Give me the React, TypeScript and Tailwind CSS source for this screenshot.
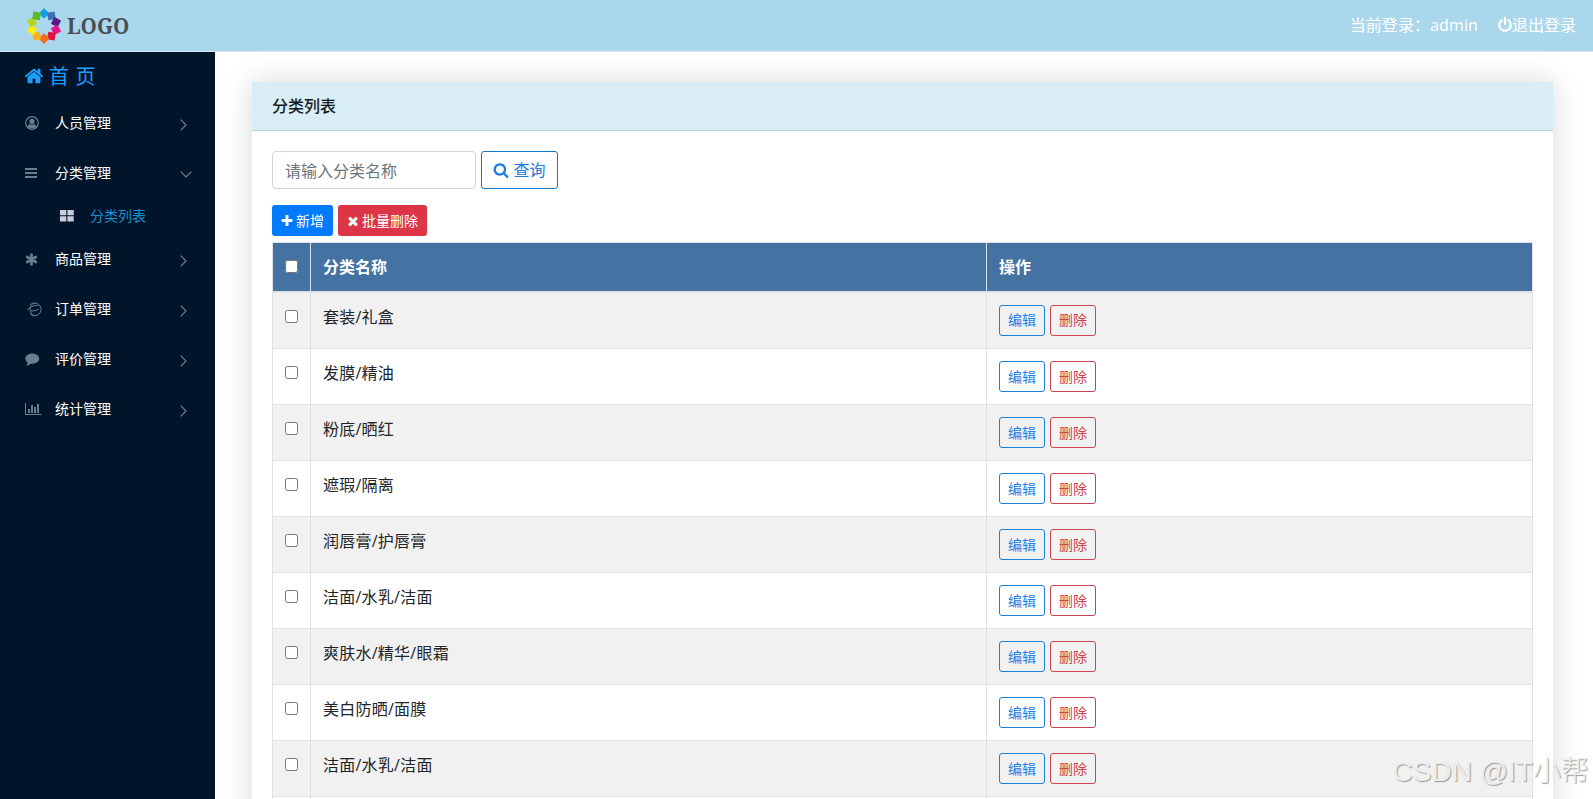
import React from 'react';
import clsx from 'clsx';

const logoColors = [
  '#149ee8', '#3f6fb5', '#5a1a86', '#e6128c', '#dc1440',
  '#f26c1c', '#fbb01a', '#f6ee10', '#b4d81c', '#58b82e',
];

// 1792 x 1792 icon grid
const icons = {
  home: 'M1472 992v480q0 26-19 45t-45 19h-384v-384h-256v384h-384q-26 0-45-19t-19-45v-480q0-1 .5-3t.5-3l575-474 575 474q1 2 1 6zm223-69l-62 74q-8 9-21 11h-3q-13 0-21-7l-692-577-692 577q-12 8-24 7-13-2-21-11l-62-74q-8-10-7-23.5t11-21.5l719-599q32-26 76-26t76 26l244 204v-195q0-14 9-23t23-9h192q14 0 23 9t9 23v408l219 182q10 8 11 21.5t-7 23.5z',
  power: 'M1664 896q0 156-61 298t-164 245-245 164-298 61-298-61-245-164-164-245-61-298q0-182 80.5-343t226.5-270q43-32 95.5-25t83.5 50q32 42 24.5 94.5t-49.5 84.5q-98 74-151.5 181t-53.5 228q0 104 40.5 198.5t109.5 163.5 163.5 109.5 198.5 40.5 198.5-40.5 163.5-109.5 109.5-163.5 40.5-198.5q0-121-53.5-228t-151.5-181q-42-32-49.5-84.5t24.5-94.5q31-43 84-50t95 25q146 109 226.5 270t80.5 343zm-640-768v640q0 52-38 90t-90 38-90-38-38-90v-640q0-52 38-90t90-38 90 38 38 90z',
  search: 'M1216 832q0-185-131.5-316.5t-316.5-131.5-316.5 131.5-131.5 316.5 131.5 316.5 316.5 131.5 316.5-131.5 131.5-316.5zm512 832q0 52-38 90t-90 38q-54 0-90-38l-343-342q-179 124-399 124-143 0-273.5-55.5t-225-150-150-225-55.5-273.5 55.5-273.5 150-225 225-150 273.5-55.5 273.5 55.5 225 150 150 225 55.5 273.5q0 220-124 399l343 343q37 37 37 90z',
  plus: 'M1600 736v192q0 40-28 68t-68 28h-416v416q0 40-28 68t-68 28h-192q-40 0-68-28t-28-68v-416h-416q-40 0-68-28t-28-68v-192q0-40 28-68t68-28h416v-416q0-40 28-68t68-28h192q40 0 68 28t28 68v416h416q40 0 68 28t28 68z',
  times: 'M1490 1322q0 40-28 68l-136 136q-28 28-68 28t-68-28l-294-294-294 294q-28 28-68 28t-68-28l-136-136q-28-28-28-68t28-68l294-294-294-294q-28-28-28-68t28-68l136-136q28-28 68-28t68 28l294 294 294-294q28-28 68-28t68 28l136 136q28 28 28 68t-28 68l-294 294 294 294q28 28 28 68z',
};

const categories = [
  '套装/礼盒',
  '发膜/精油',
  '粉底/晒红',
  '遮瑕/隔离',
  '润唇膏/护唇膏',
  '洁面/水乳/洁面',
  '爽肤水/精华/眼霜',
  '美白防晒/面膜',
  '洁面/水乳/洁面',
];

function Icon({ name, className }: { name: keyof typeof icons; className?: string }) {
  return (
    <svg className={clsx('shrink-0', className)} viewBox="0 0 1792 1792" fill="currentColor">
      <path d={icons[name]} />
    </svg>
  );
}

function Logo() {
  return (
    <div className="flex items-center">
      <svg width="36" height="36" viewBox="-18 -18 36 36">
        {logoColors.map((color, i) => (
          <rect key={i} x="-3.8" y="-16.4" width="7.6" height="7.6" fill={color} transform={`rotate(${i * 36}) rotate(45 0 -12.6)`} />
        ))}
      </svg>
      <span className="ml-[5px] font-['Noto_Serif','Liberation_Serif',serif] text-[20.8px] font-bold text-[#4a4f55]">LOGO</span>
    </div>
  );
}

function UserIcon() {
  return (
    <svg width="14" height="14" viewBox="0 0 14 14">
      <circle cx="7" cy="7" r="6.3" fill="none" stroke="currentColor" strokeWidth="1.2" />
      <circle cx="7" cy="5.4" r="2.6" fill="currentColor" />
      <path d="M2.4 10.6C3 8.8 4.4 8.2 5.4 8.2C6.4 8.8 7.6 8.8 8.6 8.2C9.6 8.2 11 8.8 11.6 10.6C9.6 13.1 4.4 13.1 2.4 10.6Z" fill="currentColor" />
    </svg>
  );
}

function BarsIcon() {
  return (
    <svg width="12" height="10" viewBox="0 0 12 10" fill="currentColor">
      <path d="M0 0h12v2H0zM0 4h12v2H0zM0 8h12v2H0z" />
    </svg>
  );
}

function AsteriskIcon() {
  return (
    <svg width="13" height="13" viewBox="0 0 13 13" stroke="currentColor" strokeWidth="2.7" strokeLinecap="round">
      <path d="M6.5 1.5v10M2.2 4l8.6 5M10.8 4L2.2 9" />
    </svg>
  );
}

function SwirlIcon() {
  return (
    <svg className="ml-[2px]" width="15" height="15" viewBox="0 0 15 15" fill="none" stroke="currentColor" strokeWidth="1">
      <path d="M3.4 2.6A6.4 6.4 0 1 1 3.2 12" />
      <path d="M8 1C3.6 2.4 1.8 6 3.6 10.2C5 13.2 7.5 14 10 13.6" />
      <path d="M.6 8C2.5 5 6 3.4 11 3.4M4 8.8C7 9.2 9.5 8.4 11.5 7" />
    </svg>
  );
}

function CommentIcon() {
  return (
    <svg width="15" height="13" viewBox="0 0 15 13" fill="currentColor">
      <path d="M7.3.4C11.2.4 14.3 2.7 14.3 5.6C14.3 8.5 11.2 10.8 7.3 10.8C6.8 10.8 6.3 10.8 5.8 10.7C4.6 11.8 3 12.5 1.2 12.6C1.9 11.8 2.5 10.9 2.7 9.7C1.2 8.7.3 7.2.3 5.6C.3 2.7 3.4.4 7.3.4Z" />
    </svg>
  );
}

function ChartIcon() {
  return (
    <svg width="17" height="13" viewBox="0 0 17 13" fill="currentColor">
      <path d="M0 0h1v11h15.5v1H0zM3 6h2v4H3zM6 2h2v8H6zM9 4h2v6H9zM12 1h2v9h-2z" />
    </svg>
  );
}

function GridIcon() {
  return (
    <svg className="mr-[16px] text-[#c8cede]" width="14" height="12" viewBox="0 0 14 12" fill="currentColor">
      <path d="M0 0h6.3v5.3H0zM7.4 0h6.3v5.3H7.4zM0 6.3h6.3v5.3H0zM7.4 6.3h6.3v5.3H7.4z" />
    </svg>
  );
}

function Chevron({ open }: { open?: boolean }) {
  return (
    <svg
      className={open ? 'mr-[23px] mt-[3px]' : 'mr-7 mt-1'}
      width={open ? 12 : 7}
      height={open ? 7 : 12}
      viewBox={open ? '0 0 12 7' : '0 0 7 12'}
      fill="none"
      stroke="#71808f"
      strokeWidth="1.2"
    >
      <path d={open ? 'M.7.7L6 6L11.3.7' : 'M.7.7L6 6L.7 11.3'} />
    </svg>
  );
}

function MenuItem({ icon, label, open }: { icon: React.ReactNode; label: string; open?: boolean }) {
  return (
    <div className="flex h-[50px] items-center pl-[25px] text-[14px] text-white">
      <span className="flex w-[30px] items-center text-[#6a7f8e]">{icon}</span>
      <span className="flex-1">{label}</span>
      <Chevron open={open} />
    </div>
  );
}

function Sidebar() {
  return (
    <aside className="w-[215px] shrink-0 bg-[#001529]">
      <div className="flex h-[46px] items-center pl-[24px] pt-[3px] text-[20px] text-[#1e9fff]">
        <Icon name="home" className="mb-[2px] mr-[5px] size-[20px]" />
        <span className="tracking-[0.6px]">首 页</span>
      </div>
      <MenuItem icon={<UserIcon />} label="人员管理" />
      <MenuItem icon={<BarsIcon />} label="分类管理" open />
      <div className="flex h-9 items-center pl-[60px] text-[14px] text-[#1890d8]">
        <GridIcon />
        <span>分类列表</span>
      </div>
      <MenuItem icon={<AsteriskIcon />} label="商品管理" />
      <MenuItem icon={<SwirlIcon />} label="订单管理" />
      <MenuItem icon={<CommentIcon />} label="评价管理" />
      <MenuItem icon={<ChartIcon />} label="统计管理" />
    </aside>
  );
}

function CategoryTable() {
  return (
    <table className="mt-[6px] w-[1261px] table-fixed border-collapse border border-[#dee2e6]">
      <thead>
        <tr className="h-[49px] bg-[#4472a2] text-left text-white">
          <th className="w-[38px] border border-b-2 border-[#dee2e6] pl-3">
            <input type="checkbox" className="block size-[13px]" />
          </th>
          <th className="w-[676px] border border-b-2 border-[#dee2e6] px-3">分类名称</th>
          <th className="border border-b-2 border-[#dee2e6] px-3">操作</th>
        </tr>
      </thead>
      <tbody>
        {categories.map((name, i) => (
          <tr key={i} className="h-14 first:h-[57px] odd:bg-[#f1f1f1]">
            <td className="border border-[#dee2e6] pl-3 pt-[17px] align-top">
              <input type="checkbox" className="block size-[13px]" />
            </td>
            <td className="border border-[#dee2e6] px-3 pt-3 align-top tracking-[0.25px]">{name}</td>
            <td className="border border-[#dee2e6] px-3 pt-3 align-top">
              <div className="flex gap-[5px] text-[14px]">
                <button className="h-[31px] w-[46px] rounded-[3px] border border-[#1c80d8] text-[#1c80e8]">编辑</button>
                <button className="h-[31px] w-[46px] rounded-[3px] border border-[#cc4250] text-[#cc4250]">删除</button>
              </div>
            </td>
          </tr>
        ))}
        <tr className="h-14">
          <td className="border border-[#dee2e6]" />
          <td className="border border-[#dee2e6]" />
          <td className="border border-[#dee2e6]" />
        </tr>
      </tbody>
    </table>
  );
}

export default function App() {
  return (
    <div className="relative flex h-[799px] w-[1593px] flex-col overflow-hidden bg-white font-['Open_Sans','Noto_Sans_CJK_SC',sans-serif] text-[16px] leading-6 text-[#212529]">
      <header className="flex h-[52px] shrink-0 items-center justify-between border-b border-[#d3e9f5] bg-[#abd7ed] pl-[26px] pr-[17px]">
        <Logo />
        <div className="flex items-center pb-px text-white">
          <span className="tracking-[0.1px]">当前登录：admin</span>
          <Icon name="power" className="-mr-px ml-[19px] size-[16px]" />
          <span>退出登录</span>
        </div>
      </header>
      <div className="flex min-h-0 flex-1">
        <Sidebar />
        <main className="min-w-0 flex-1 overflow-hidden pl-[37px] pt-[30px]">
          <section className="h-[900px] w-[1301px] rounded-t-[2px] bg-white shadow-[0_0_30px_rgba(0,0,0,0.16)]">
            <h1 className="flex h-[49px] items-center border-b border-[#b5d3da] bg-[#d8edf5] px-5 font-medium text-[#15191d]">分类列表</h1>
            <div className="px-5 pt-5">
              <div className="flex gap-[5px]">
                <input
                  className="h-[38px] w-[204px] rounded-[4px] border border-[#ced4da] px-3 pt-px outline-none placeholder:text-[#6c757d]"
                  placeholder="请输入分类名称"
                />
                <button className="flex h-[38px] w-[77px] items-center justify-center gap-1 rounded-[3px] border border-[#0d7ac8] text-[#1a7ae0]">
                  <Icon name="search" className="size-4" />
                  查询
                </button>
              </div>
              <div className="mt-4 flex gap-[5px] text-[14px] text-white">
                <button className="flex h-[31px] w-[61px] items-center pl-[8px] gap-[2px] rounded-[3px] bg-[#007bff]">
                  <Icon name="plus" className="size-[14px]" />
                  新增
                </button>
                <button className="flex h-[31px] w-[89px] items-center pl-[8px] gap-[2px] rounded-[3px] bg-[#dc3545]">
                  <Icon name="times" className="mt-px size-[14px]" />
                  批量删除
                </button>
              </div>
              <CategoryTable />
            </div>
          </section>
        </main>
      </div>
      <div className="pointer-events-none absolute bottom-[9px] right-[4px] whitespace-nowrap font-['Liberation_Sans','Noto_Sans_CJK_SC',sans-serif] text-[28px] font-light leading-9 text-[#eeeeee] [text-shadow:1px_1px_1px_#999]">
        CSDN @IT小帮
      </div>
    </div>
  );
}
